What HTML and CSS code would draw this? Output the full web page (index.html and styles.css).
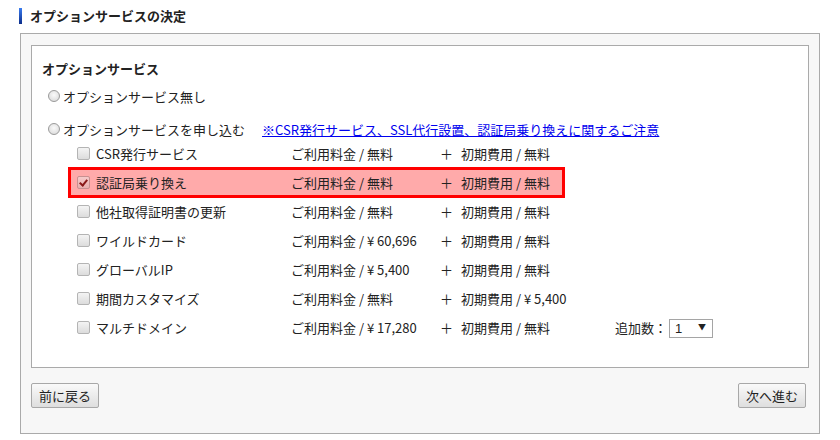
FILE: index.html
```html
<!DOCTYPE html>
<html lang="ja">
<head>
    <meta charset="UTF-8">
    <title>オプションサービスの決定</title>
    <link rel="stylesheet" href="styles.css">
</head>
<body>
    <h2 class="page-title">オプションサービスの決定</h2>

    <div class="outer-box">
        <form name="optionService" class="inner-box">
            <h3 class="section-title">オプションサービス</h3>

            <!-- 申込有無 -->
            <label class="radio-row">
                <input type="radio" name="optionUse" value="NONE">
                オプションサービス無し
            </label>
            <div class="radio-row radio-apply">
                <label><input type="radio" name="optionUse" value="APPLY"> オプションサービスを申し込む</label>
                <a href="#" class="notice-link">※CSR発行サービス、SSL代行設置、認証局乗り換えに関するご注意</a>
            </div>

            <!-- オプション一覧 -->
            <div class="option-list">
                <label class="option-row">
                    <input type="checkbox" name="csr">
                    <span>CSR発行サービス</span>
                    <span>ご利用料金 / 無料</span>
                    <span>＋</span>
                    <span>初期費用 / 無料</span>
                </label>
                <label class="option-row selected">
                    <input type="checkbox" name="caChange" checked>
                    <span>認証局乗り換え</span>
                    <span>ご利用料金 / 無料</span>
                    <span>＋</span>
                    <span>初期費用 / 無料</span>
                </label>
                <label class="option-row">
                    <input type="checkbox" name="renewOther">
                    <span>他社取得証明書の更新</span>
                    <span>ご利用料金 / 無料</span>
                    <span>＋</span>
                    <span>初期費用 / 無料</span>
                </label>
                <label class="option-row">
                    <input type="checkbox" name="wildcard">
                    <span>ワイルドカード</span>
                    <span>ご利用料金 / ¥ 60,696</span>
                    <span>＋</span>
                    <span>初期費用 / 無料</span>
                </label>
                <label class="option-row">
                    <input type="checkbox" name="globalIp">
                    <span>グローバルIP</span>
                    <span>ご利用料金 / ¥ 5,400</span>
                    <span>＋</span>
                    <span>初期費用 / 無料</span>
                </label>
                <label class="option-row">
                    <input type="checkbox" name="customTerm">
                    <span>期間カスタマイズ</span>
                    <span>ご利用料金 / 無料</span>
                    <span>＋</span>
                    <span>初期費用 / ¥ 5,400</span>
                </label>
                <div class="option-row">
                    <input type="checkbox" name="multiDomain">
                    <span>マルチドメイン</span>
                    <span>ご利用料金 / ¥ 17,280</span>
                    <span>＋</span>
                    <span>初期費用 / 無料</span>
                    <span class="add-count">追加数：<span class="select-wrap"><select name="domainCount">
                        <option>1</option>
                        <option>2</option>
                        <option>3</option>
                    </select></span></span>
                </div>
            </div>
        </form>

        <div class="button-row">
            <button type="button" class="btn">前に戻る</button>
            <button type="submit" class="btn">次へ進む</button>
        </div>
    </div>
</body>
</html>
```

FILE: styles.css
```css
body {
    margin: 0;
    font-family: "Noto Sans CJK JP", "DejaVu Sans", sans-serif;
    font-size: 13px;
    color: #222;
    background: #fff;
}
.page-title {
    margin: 0 0 0 19px;
    padding: 8px 0 0 0;
    height: 33px;
    box-sizing: border-box;
    display: flex;
    align-items: flex-start;
    font-size: 13px;
    line-height: 16px;
    font-weight: bold;
}
.page-title::before {
    content: "";
    width: 3px;
    height: 16px;
    margin-right: 8px;
    background: linear-gradient(#3a7cf0, #0b2d8a);
}
.outer-box {
    width: 800px;
    margin-left: 20px;
    padding: 11px 10px 25px 10px;
    box-sizing: border-box;
    background: #f7f7f7;
    border: 1px solid #aaa;
}
.inner-box {
    background: #fff;
    border: 1px solid #aaa;
    padding: 14px 10px 25px 10px;
}
.section-title {
    margin: 0;
    font-size: 13px;
    line-height: 18px;
    font-weight: bold;
}
.radio-row {
    display: flex;
    align-items: center;
    height: 20px;
    margin-top: 8px;
    padding-left: 6px;
}
.radio-apply {
    margin-top: 13px;
}
.radio-apply label {
    display: flex;
    align-items: center;
}
input[type="radio"] {
    appearance: none;
    width: 12px;
    height: 12px;
    margin: 0 3px 0 0;
    border: 1px solid #9a9a9a;
    border-radius: 50%;
    background: radial-gradient(circle at 50% 40%, #fafafa, #d6d6d6);
    box-sizing: border-box;
}
.notice-link {
    margin-left: 17px;
    color: #0000ee;
    text-decoration: underline;
}
.option-list {
    margin-left: 26px;
    width: 680px;
}
.option-row {
    display: grid;
    grid-template-columns: 19px 195px 149px 21px 154px auto;
    align-items: center;
    height: 29px;
    padding-left: 9px;
    box-sizing: border-box;
}
.option-row.selected {
    width: 497px;
    height: 31px;
    margin: -1px 0;
    padding-left: 6px;
    border: 3px solid #f00;
    background: #ffaaaa;
}
input[type="checkbox"] {
    appearance: none;
    position: relative;
    width: 13px;
    height: 13px;
    margin: 0;
    border: 1px solid #b4b4b4;
    border-radius: 2px;
    background: linear-gradient(#f4f4f4, #dcdcdc);
    box-sizing: border-box;
}
input[type="checkbox"]:checked {
    border-color: #c89090;
    background: linear-gradient(#f6caca, #e8aeae);
}
input[type="checkbox"]:checked::after {
    content: "";
    position: absolute;
    left: 3px;
    top: 1px;
    width: 3px;
    height: 6px;
    border: solid #8a1818;
    border-width: 0 2px 2px 0;
    transform: rotate(40deg);
}
.add-count {
    display: flex;
    align-items: center;
}
.select-wrap {
    position: relative;
    display: inline-block;
    margin-left: 2px;
}
.select-wrap select {
    appearance: none;
    width: 44px;
    height: 19px;
    padding: 0 0 0 5px;
    border: 1px solid #a5a5a5;
    border-radius: 0;
    background: #fff;
    font-family: "Liberation Sans", sans-serif;
    font-size: 13px;
    color: #222;
}
.select-wrap::after {
    content: "▼";
    position: absolute;
    right: 7px;
    top: 4px;
    font-size: 8px;
    line-height: 10px;
    color: #222;
    pointer-events: none;
}
.button-row {
    display: flex;
    justify-content: space-between;
    margin-top: 15px;
    padding-right: 3px;
}
.btn {
    height: 25px;
    padding: 0 7px;
    border: 1px solid #a8a8a8;
    border-radius: 2px;
    background: linear-gradient(#fafafa, #dedede);
    font-family: "Noto Sans CJK JP", sans-serif;
    font-size: 13px;
    color: #222;
    cursor: pointer;
}
```
